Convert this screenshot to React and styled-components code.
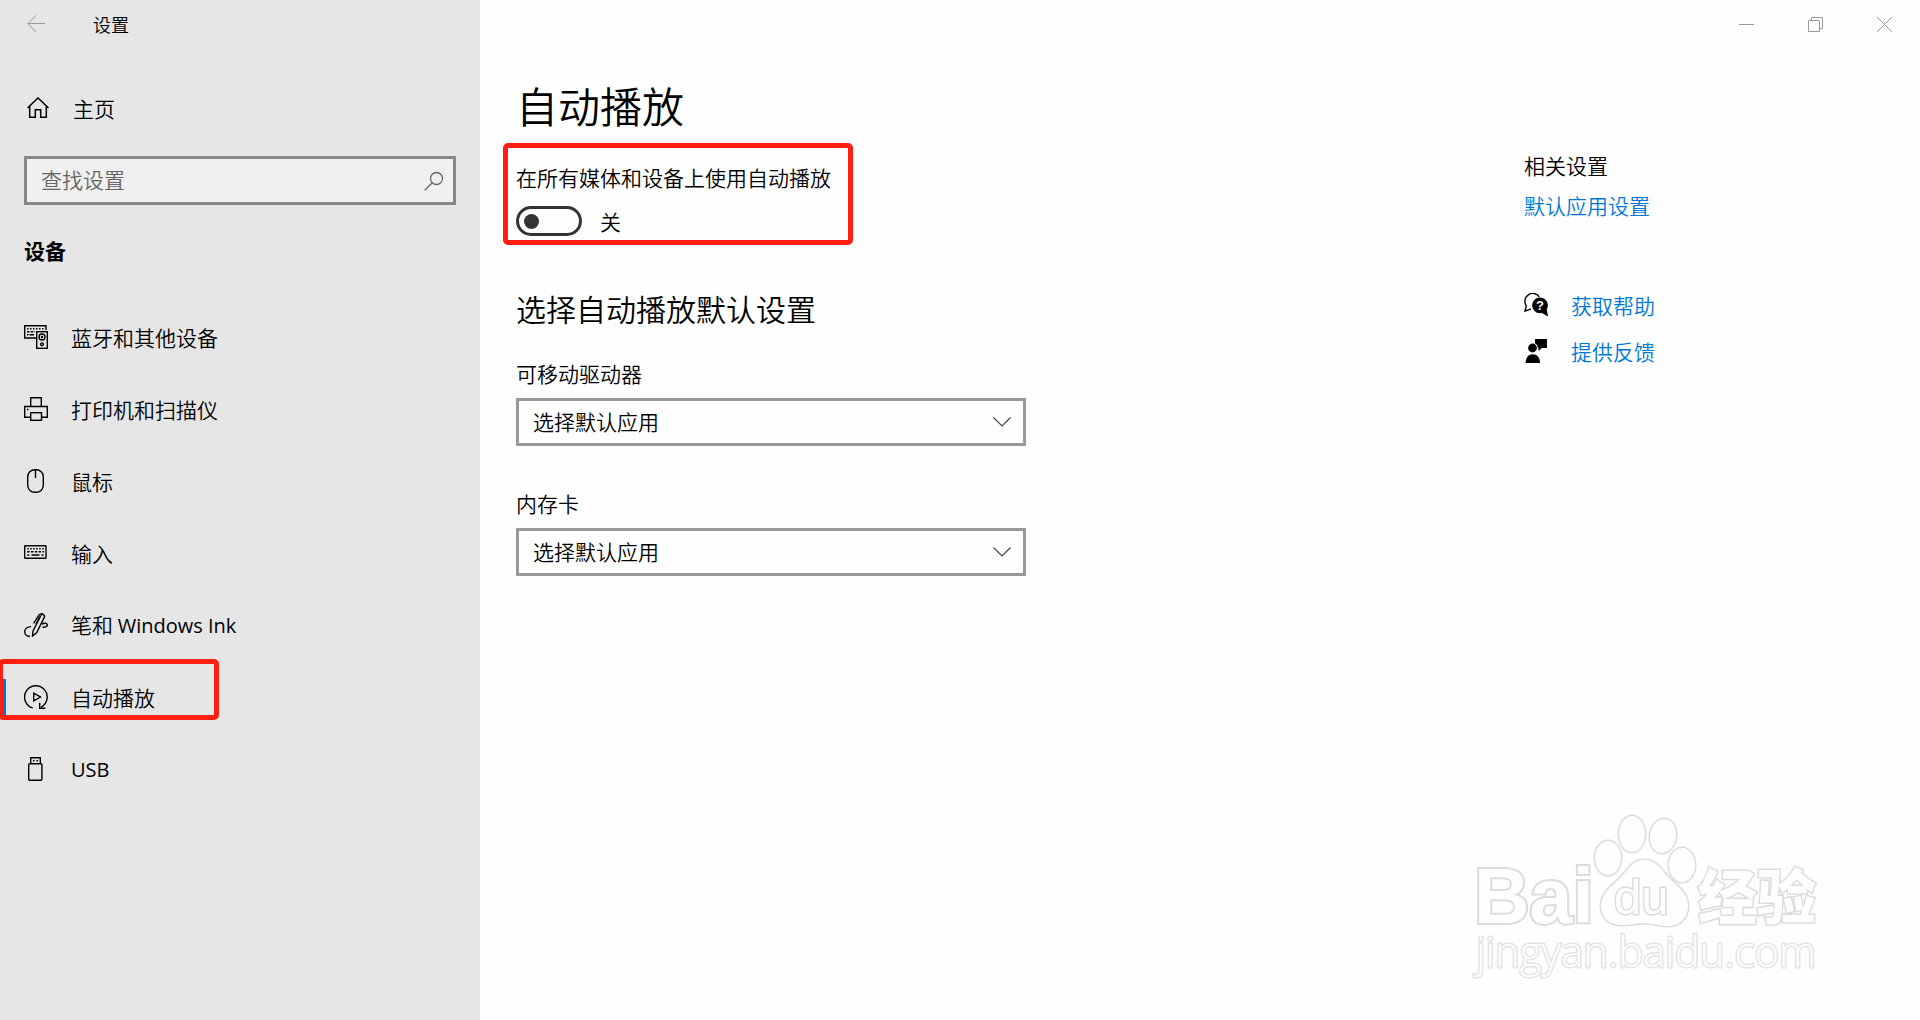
import React, { useState } from "react"
import styled, { createGlobalStyle } from "styled-components"

const BackIcon = () => (
  <svg width="18" height="18" viewBox="0 0 18 18" fill="none" stroke="#999">
    <path d="M18 8.5H1M9 0.5L1 8.5L9 17" />
  </svg>
)

const HomeIcon = () => (
  <svg width="22" height="22" viewBox="0 0 22 22" fill="none" stroke="#000" strokeWidth="1.5">
    <path d="M0.5 11L11 1L21.5 11" />
    <path d="M2.7 9.5V20.3H8.3V12.7H13.7V20.3H19.3V9.5" />
  </svg>
)

const SearchIcon = () => (
  <svg width="20" height="20" viewBox="0 0 20 20" fill="none" stroke="#666" strokeWidth="1.3">
    <circle cx="12.5" cy="7.5" r="6" />
    <path d="M8.2 11.8L0.7 19.3" />
  </svg>
)

const ChevronIcon = () => (
  <svg width="18" height="10" viewBox="0 0 18 10" fill="none" stroke="#444" strokeWidth="1.2">
    <path d="M0.5 0.5L9 9L17.5 0.5" />
  </svg>
)

const MinimizeIcon = () => (
  <svg width="15" height="15" viewBox="0 0 15 15" stroke="#999">
    <path d="M0 7.5H15" />
  </svg>
)

const RestoreIcon = () => (
  <svg width="15" height="15" viewBox="0 0 15 15" fill="none" stroke="#999">
    <path d="M0.5 3.5H11.5V14.5H0.5ZM3.5 3.5V0.5H14.5V11.5H11.5" />
  </svg>
)

const CloseIcon = () => (
  <svg width="15" height="15" viewBox="0 0 15 15" stroke="#999">
    <path d="M0 0L15 15M15 0L0 15" />
  </svg>
)

const NavSvg = ({ children }) => (
  <svg width="24" height="24" viewBox="0 0 24 24" fill="none" stroke="#000" strokeWidth="1.4">
    {children}
  </svg>
)

const DevicesIcon = () => (
  <NavSvg>
    <path d="M12 13H0.7V0.7H22V5" />
    <path d="M3 3.7H20" strokeDasharray="1.5 1.5" />
    <path d="M3 6.8H11" strokeDasharray="2.5 1.2" />
    <path d="M3 9.8H10" strokeDasharray="1.5 1 5 1" />
    <rect x="12.7" y="6.7" width="10.6" height="16.6" />
    <circle cx="18" cy="12" r="3" />
    <circle cx="18" cy="12" r="0.5" />
    <circle cx="18" cy="19.3" r="1.4" />
  </NavSvg>
)

const PrinterIcon = () => (
  <NavSvg>
    <path d="M6.7 9.5V0.7H17.3V9.5" />
    <path d="M6 20.3H0.7V9.5H23.3V20.3H18" />
    <rect x="6.7" y="15.7" width="10.8" height="7.6" />
    <path d="M3 12.5H4.5" />
  </NavSvg>
)

const MouseIcon = () => (
  <NavSvg>
    <rect x="3.7" y="0.7" width="15.6" height="22.6" rx="7" />
    <path d="M11.5 0.7V9" />
  </NavSvg>
)

const KeyboardIcon = () => (
  <NavSvg>
    <rect x="0.7" y="4.7" width="21.3" height="12.6" rx="0.5" />
    <path d="M3.2 7.7H20" strokeDasharray="1.5 1.5" />
    <path d="M3.2 10.8H20" strokeDasharray="2.5 1.3" />
    <path d="M3.2 14H5.2M7.5 14H15.5M17.5 14H19.5" />
  </NavSvg>
)

const PenIcon = () => (
  <NavSvg>
    <path d="M7.2 13.6C3.3 13.6 0.7 15.8 0.7 18.8C0.7 21.8 3 23.4 6 23.2" />
    <path d="M8.5 23L9 18L16.8 2.8C18 0.2 21.4 1.6 20.3 4.4L12.6 19.8Z" />
    <path d="M9.6 10.4L14.6 2.6C15.7 0.8 18 0.2 19 1.3M12 11L16 3.5" />
    <path d="M17.8 11.2C20 10 22.8 9.8 23.3 11.6C23.7 13.4 21.5 14.4 18.5 14.2" />
  </NavSvg>
)

const AutoPlayIcon = () => (
  <NavSvg>
    <path d="M8.8 22.9A11.3 11.3 0 1 1 17 22.1" />
    <path d="M15.7 17.8V23.3H21.3" />
    <path d="M9.7 8.2V15.8L16.5 12Z" />
  </NavSvg>
)

const UsbIcon = () => (
  <NavSvg>
    <path d="M6.7 6.5V0.7H16.3V6.5" />
    <rect x="4.7" y="6.7" width="13.2" height="16.6" rx="1" />
    <path d="M9 3.7H10.5M12.5 3.7H14" />
  </NavSvg>
)

const HelpIcon = () => (
  <svg width="24" height="24" viewBox="0 0 24 24">
    <path
      d="M15.3 3.8A7.6 7.6 0 0 0 2.3 12.8L1 18.2L7 15.8"
      fill="none"
      stroke="#000"
      strokeWidth="1.4"
    />
    <circle cx="16" cy="12.3" r="7.9" />
    <path d="M22.8 16L24 23.4L17.5 19.8Z" />
    <text
      x="16"
      y="17"
      fill="#fff"
      fontFamily="Liberation Sans, sans-serif"
      fontSize="13"
      fontWeight="700"
      textAnchor="middle"
    >
      ?
    </text>
  </svg>
)

const FeedbackIcon = () => (
  <svg width="24" height="24" viewBox="0 0 24 24">
    <path d="M11 0H23V9H18L14.5 12V9H13.9A5.5 5.5 0 0 0 11 4.2Z" />
    <circle cx="8.5" cy="9" r="4.4" />
    <path d="M1.7 24C1.7 18.5 4.5 15.2 8.8 15.2S16 18.5 16 24Z" />
  </svg>
)

const Watermark = () => (
  <WatermarkSvg width="356" height="176" viewBox="0 0 356 176">
    <g fill="#fefefe" stroke="#dcdcdc" strokeWidth="3" paintOrder="stroke">
      <text
        x="4"
        y="118"
        fontFamily="Liberation Sans, sans-serif"
        fontSize="77"
        fontWeight="700"
        strokeWidth="4"
      >
        Bai
      </text>
      <ellipse cx="138" cy="53" rx="13" ry="17" />
      <ellipse cx="162" cy="29" rx="13" ry="18" />
      <ellipse cx="193" cy="31" rx="13" ry="17" transform="rotate(10 193 31)" />
      <ellipse cx="212" cy="60" rx="13" ry="17" />
      <path d="M174 55C161 55 159 65 148 75C139 83 131 90 131 101C131 113 140 120 152 120C162 120 166 118 174 118C182 118 188 121 198 121C210 121 218 113 218 101C218 88 207 81 200 74C190 63 186 55 174 55Z" />
      <text x="144" y="109" fontFamily="Liberation Sans, sans-serif" fontSize="49">
        du
      </text>
      <text
        x="228"
        y="114"
        fontFamily="Noto Sans CJK SC, sans-serif"
        fontSize="59"
        fontWeight="900"
      >
        经验
      </text>
      <text x="6" y="162" fontFamily="Open Sans, sans-serif" fontSize="42" stroke="#e4e4e4">
        jingyan.baidu.com
      </text>
    </g>
  </WatermarkSvg>
)

const NAV_ITEMS = [
  { id: "devices", label: "蓝牙和其他设备", Icon: DevicesIcon },
  { id: "printers", label: "打印机和扫描仪", Icon: PrinterIcon },
  { id: "mouse", label: "鼠标", Icon: MouseIcon },
  { id: "typing", label: "输入", Icon: KeyboardIcon },
  { id: "pen", label: "笔和 ", latin: "Windows Ink", Icon: PenIcon },
  { id: "autoplay", label: "自动播放", Icon: AutoPlayIcon, marked: true },
  { id: "usb", latin: "USB", Icon: UsbIcon },
]

const DRIVES = [
  { id: "removable", label: "可移动驱动器" },
  { id: "memory-card", label: "内存卡" },
]

const ACTIONS = ["选择默认应用", "不执行操作", "打开文件夹以查看文件", "每次都询问"]

const DriveField = ({ id, label }) => (
  <Field>
    <label htmlFor={id}>{label}</label>
    <SelectBox>
      <Select id={id}>
        {ACTIONS.map((action) => (
          <option key={action}>{action}</option>
        ))}
      </Select>
      <ChevronIcon />
    </SelectBox>
  </Field>
)

const App = () => {
  const [autoPlay, setAutoPlay] = useState(false)

  return (
    <Page>
      <GlobalStyle />
      <Sidebar>
        <TitleRow>
          <BackButton aria-label="返回">
            <BackIcon />
          </BackButton>
          <span>设置</span>
        </TitleRow>
        <HomeLink href="#home">
          <HomeIcon />
          主页
        </HomeLink>
        <SearchBox>
          <input type="text" placeholder="查找设置" aria-label="查找设置" />
          <SearchIcon />
        </SearchBox>
        <SidebarHeading>设备</SidebarHeading>
        <nav>
          {NAV_ITEMS.map(({ id, label, latin, Icon, marked }) => (
            <NavLink key={id} href={`#${id}`} $active={marked}>
              <Icon />
              <span>
                {label}
                {latin && <Latin>{latin}</Latin>}
              </span>
              {marked && <NavMark />}
            </NavLink>
          ))}
        </nav>
      </Sidebar>

      <Main>
        <WindowControls>
          <button aria-label="最小化">
            <MinimizeIcon />
          </button>
          <button aria-label="还原">
            <RestoreIcon />
          </button>
          <button aria-label="关闭">
            <CloseIcon />
          </button>
        </WindowControls>
        <Columns>
          <Content>
            <h1>自动播放</h1>
            <ToggleGroup>
              <label htmlFor="autoplay-switch">在所有媒体和设备上使用自动播放</label>
              <ToggleRow>
                <Toggle
                  id="autoplay-switch"
                  type="checkbox"
                  role="switch"
                  checked={autoPlay}
                  onChange={(e) => setAutoPlay(e.target.checked)}
                />
                <span>{autoPlay ? "开" : "关"}</span>
              </ToggleRow>
              <ToggleMark />
            </ToggleGroup>
            <h2>选择自动播放默认设置</h2>
            <Fields>
              {DRIVES.map((drive) => (
                <DriveField key={drive.id} {...drive} />
              ))}
            </Fields>
          </Content>
          <Related>
            <h3>相关设置</h3>
            <a href="#default-apps">默认应用设置</a>
            <Support>
              <a href="#help">
                <HelpIcon />
                获取帮助
              </a>
              <a href="#feedback">
                <FeedbackIcon />
                提供反馈
              </a>
            </Support>
          </Related>
        </Columns>
      </Main>
      <Watermark />
    </Page>
  )
}

const GlobalStyle = createGlobalStyle`
  * {
    box-sizing: border-box;
  }
  body {
    margin: 0;
    color: #000;
    background: #fefefe;
    font-family: "Noto Sans CJK SC", sans-serif;
    font-size: 21px;
    font-weight: 350;
    line-height: 30px;
  }
  h1, h2, h3 {
    margin: 0;
    font-weight: 350;
  }
  a {
    text-decoration: none;
  }
  button {
    padding: 0;
    border: 0;
    background: none;
  }
  input, select {
    font: inherit;
  }
  svg {
    display: block;
    flex-shrink: 0;
  }
`

const Page = styled.div`
  position: relative;
  display: grid;
  grid-template-columns: 480px minmax(0, 1fr);
  min-height: 100vh;
`

const Sidebar = styled.aside`
  background: #e6e6e6;
`

const TitleRow = styled.div`
  display: flex;
  align-items: center;
  gap: 48px;
  height: 48px;
  padding-left: 27px;
  font-size: 18px;
`

const BackButton = styled.button`
  display: flex;
`

const HomeLink = styled.a`
  display: flex;
  align-items: center;
  gap: 24px;
  height: 48px;
  margin-top: 36px;
  padding-left: 27px;
  color: #000;
`

const SearchBox = styled.div`
  display: flex;
  align-items: center;
  height: 49px;
  margin: 24px 24px 0;
  padding: 0 9px 0 14px;
  border: 3px solid #888;
  background: #f0f0f0;
  input {
    flex: 1;
    min-width: 0;
    height: 34px;
    padding: 0 0 4px;
    border: 0;
    outline: 0;
    background: none;
  }
  input::placeholder {
    color: #666;
  }
`

const SidebarHeading = styled.h2`
  margin: 30px 24px 36px;
  font-size: 21px;
  font-weight: 700;
`

const NavLink = styled.a`
  position: relative;
  display: flex;
  align-items: center;
  gap: 23px;
  height: 72px;
  padding-left: 24px;
  color: #000;
  &::before {
    content: "";
    display: ${({ $active }) => ($active ? "block" : "none")};
    position: absolute;
    left: 0;
    width: 6px;
    height: 36px;
    background: #0078d7;
  }
`

const Latin = styled.span`
  font-family: "Open Sans", sans-serif;
  font-size: 20px;
  font-weight: 400;
`

// red frame drawn over the settings the guide points at
const Mark = styled.div`
  position: absolute;
  border: 5px solid #ff1f12;
  border-radius: 5px;
  pointer-events: none;
`

const NavMark = styled(Mark)`
  top: -2px;
  left: -2px;
  width: 221px;
  height: 61px;
`

const ToggleMark = styled(Mark)`
  top: -19px;
  left: -13px;
  width: 350px;
  height: 102px;
`

const Main = styled.main`
  min-width: 0;
`

const WindowControls = styled.div`
  display: flex;
  justify-content: flex-end;
  height: 50px;
  padding-right: 1px;
  button {
    display: flex;
    align-items: center;
    justify-content: center;
    width: 69px;
    height: 48px;
  }
`

const Columns = styled.div`
  display: grid;
  grid-template-columns: minmax(0, 1fr) 396px;
`

const Content = styled.section`
  padding: 27px 36px 0;
  h1 {
    font-size: 42px;
    line-height: 56px;
  }
  h2 {
    margin: 52px 0 30px;
    font-size: 30px;
    line-height: 40px;
  }
`

const ToggleGroup = styled.div`
  position: relative;
  margin-top: 29px;
`

const ToggleRow = styled.div`
  display: flex;
  align-items: center;
  gap: 18px;
  height: 30px;
  margin-top: 14px;
`

const Toggle = styled.input`
  display: flex;
  align-items: center;
  appearance: none;
  width: 66px;
  height: 30px;
  margin: 0;
  padding: 0 5px;
  border: 3px solid #333;
  border-radius: 15px;
  &::before {
    content: "";
    width: 15px;
    height: 15px;
    border-radius: 50%;
    background: #333;
  }
  &:checked {
    justify-content: flex-end;
    border-color: #0078d7;
    background: #0078d7;
  }
  &:checked::before {
    background: #fff;
  }
`

const Fields = styled.div`
  display: grid;
  gap: 42px;
  max-width: 510px;
`

const Field = styled.div`
  display: grid;
  gap: 10px;
`

const SelectBox = styled.div`
  display: grid;
  grid-template-columns: 1fr 30px;
  align-items: center;
  height: 48px;
  border: 3px solid #999;
  svg {
    grid-area: 1 / 2;
    pointer-events: none;
  }
`

const Select = styled.select`
  grid-area: 1 / 1 / 2 / 3;
  appearance: none;
  height: 42px;
  padding: 0 30px 2px 14px;
  border: 0;
  color: #000;
  background: none;
`

const Related = styled.aside`
  padding-top: 100px;
  h3 {
    margin-bottom: 10px;
    font-size: 21px;
  }
  a {
    color: #0078d7;
  }
`

const Support = styled.div`
  display: grid;
  gap: 16px;
  margin-top: 70px;
  a {
    display: flex;
    align-items: center;
    gap: 23px;
  }
`

const WatermarkSvg = styled.svg`
  position: absolute;
  right: 94px;
  bottom: 39px;
  pointer-events: none;
`

export default App
